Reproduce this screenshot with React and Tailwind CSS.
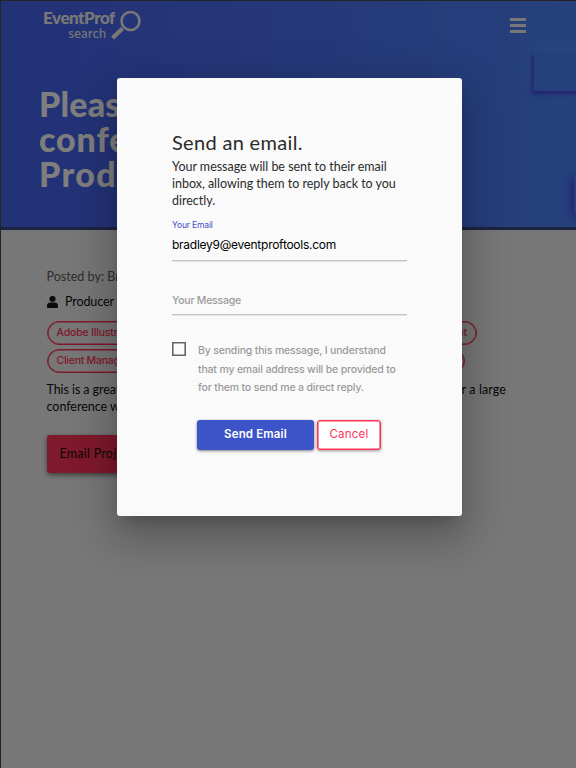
import React from "react";

const display = "font-['Lato','Open_Sans',sans-serif]";
const ui = "font-['Inter','Roboto',sans-serif]";

function Logo() {
  return (
    <div className={`relative h-[33px] w-[98px] text-[#f0f0f0] ${display}`}>
      <div className="whitespace-nowrap text-[17px] font-black leading-[15px] tracking-[-0.45px]">EventProf</div>
      <div className="w-[63.5px] whitespace-nowrap pt-px text-right text-[12.5px] font-medium leading-[16px] tracking-[0.4px]">search</div>
      <svg className="absolute left-[66.5px] top-0" width="32" height="32" viewBox="0 0 32 32" fill="none" stroke="#f0f0f0">
        <circle cx="20.5" cy="11" r="9" strokeWidth="2.6" />
        <path d="M12.5 18.5 2.5 28" strokeWidth="4.2" />
      </svg>
    </div>
  );
}

function Header() {
  return (
    <header className="relative h-[229px] overflow-hidden border-b-[3px] border-[#3a4684] bg-gradient-to-r from-[#4662ec] via-[#4b70f2] to-[#4c83f8]">
      <div className="absolute left-[533px] top-[51px] h-[39px] w-[60px] bg-[#4d81f6] shadow-[-2px_3px_4px_#4444dc,0_-6px_12px_#528cfa]" />
      <div className="absolute left-[573px] top-[174px] h-[38px] w-[20px] bg-[#4d81f6] shadow-[-3px_3px_8px_#4444dc]" />
      <div className="flex items-start justify-between pl-[42px] pr-[50px] pt-[9px]">
        <Logo />
        <div className="mt-[8px] flex w-[16px] flex-col gap-[3px]">
          <span className="h-[3px] bg-[#f0f0f0]" />
          <span className="h-[3px] bg-[#f0f0f0]" />
          <span className="h-[3px] bg-[#f0f0f0]" />
        </div>
      </div>
      <h1 className={`ml-[38px] mt-[43px] whitespace-nowrap text-[34px] font-black leading-[35px] text-[#fdfdfd] ${display}`}>
        <span className="tracking-[0.2px]">Please</span><br />
        <span className="tracking-[0.9px]">conference</span><br />
        <span className="tracking-[1.4px]">Producer</span>
      </h1>
    </header>
  );
}

function Pill({ children, className }) {
  return (
    <span className={`flex h-[24px] items-center whitespace-nowrap rounded-full border border-[#ff3358] text-[10.5px] font-medium tracking-[-0.1px] text-[#ff3358] shadow-[inset_0_0_0_0.6px_#ff3358] ${ui} ${className}`}>
      {children}
    </span>
  );
}

function Listing() {
  return (
    <main className={`pl-[45.5px] pt-[38px] text-[#101010] ${display}`}>
      <p className="whitespace-nowrap text-[12.5px] leading-[17px] tracking-[0.02px] text-[#5c5c5c]">Posted by: Br</p>
      <div className="mt-[8px] flex h-[17px] items-center">
        <svg width="11" height="12" viewBox="0 0 10 12" preserveAspectRatio="none" fill="#161616">
          <circle cx="5" cy="2.9" r="2.8" />
          <path d="M0 11V9.3C0 7.6 1.3 6.5 2.8 6.5h4.4C8.7 6.5 10 7.6 10 9.3V11q0 1-1 1H1q-1 0-1-1Z" />
        </svg>
        <span className="ml-[7.5px] text-[12.5px] leading-[17px] tracking-[-0.1px]">Producer</span>
      </div>
      <div className="mt-[10.5px] flex gap-[4px]">
        <Pill className="w-[120px] pl-[9px]"><span className="tracking-[-0.18px]">Adobe Illustr</span></Pill>
        <Pill className="w-[306.5px] justify-end pr-[9px]">Management</Pill>
      </div>
      <div className="mt-[4px] flex gap-[4px]">
        <Pill className="w-[130px] pl-[9px]"><span className="tracking-[-0.25px]">Client Manag</span></Pill>
        <Pill className="w-[284.5px] justify-end pr-[9px]">Logistics</Pill>
      </div>
      <div className="mt-[8.5px] whitespace-nowrap text-[12.5px] leading-[17px]">
        <div className="flex w-[459.5px] justify-between">
          <span className="tracking-[-0.08px]">This is a great</span>
          <span className="tracking-[0.1px]">for a large</span>
        </div>
        <div className="tracking-[-0.03px]">conference with</div>
      </div>
      <button className="mt-[20px] h-[38px] w-[130px] whitespace-nowrap rounded-[3px] bg-[#ff3358] pl-[13px] text-left text-[12.5px] tracking-[0.25px] shadow-[0_2px_5px_rgba(0,0,0,0.5)]">
        Email Proj
      </button>
    </main>
  );
}

function Dialog() {
  return (
    <section className="mt-[77.5px] h-[438px] w-[345.5px] rounded-[3px] bg-[#fafafa] px-[55.5px] pt-[54.5px] shadow-[0_11px_15px_-7px_rgba(0,0,0,0.2),0_24px_38px_3px_rgba(0,0,0,0.14),0_9px_46px_8px_rgba(0,0,0,0.12)]">
      <h2 className={`whitespace-nowrap text-[20px] leading-[21px] tracking-[0.32px] text-[#2a2a2a] ${display}`}>Send an email.</h2>
      <p className={`mt-[5px] whitespace-nowrap text-[12.5px] leading-[17px] tracking-[-0.02px] text-[#2a2a2a] ${display}`}>
        Your message will be sent to their email<br />inbox, allowing them to reply back to you<br />directly.
      </p>
      <div className="h-[52px] border-b border-[#c4c4c4] shadow-[0_1px_0_#e4e4e4]">
        <div className={`pt-[11px] text-[8.5px] leading-[11px] tracking-[-0.15px] text-[#3d50c8] ${ui}`}>Your Email</div>
        <div className={`mt-[5px] text-[12px] leading-[17px] tracking-[-0.26px] text-black ${ui}`}>bradley9@eventproftools.com</div>
      </div>
      <div className={`mt-[33px] h-[21px] border-b border-[#c4c4c4] text-[10.5px] font-medium leading-[14px] tracking-[-0.22px] text-[#9a9a9a] shadow-[0_1px_0_#e4e4e4] ${ui}`}>Your Message</div>
      <div className="mt-[27px] flex">
        <span className="h-[14px] w-[14px] shrink-0 border border-[#646464] shadow-[inset_0_0_0_0.6px_#646464]" />
        <p className={`ml-[12px] whitespace-nowrap text-[10.5px] font-medium leading-[18.5px] tracking-[-0.17px] text-[#9a9a9a] ${ui}`}>
          By sending this message, I understand<br />that my email address will be provided to<br />for them to send me a direct reply.
        </p>
      </div>
      <div className={`ml-[25px] mt-[22px] flex gap-[3px] text-[11.5px] ${ui}`}>
        <button className="h-[30px] w-[117px] rounded-[3px] bg-[#3d53c8] pt-px font-semibold tracking-[0.15px] text-white shadow-[0_1px_3px_rgba(0,0,0,0.5)]">Send Email</button>
        <button className="h-[30px] w-[64px] rounded-[3px] border border-[#ff3358] bg-white pt-px tracking-[0.25px] text-[#ff3358] shadow-[inset_0_0_0_0.6px_#ff3358,0_1px_3px_rgba(0,0,0,0.4)]">Cancel</button>
      </div>
    </section>
  );
}

export default function App() {
  return (
    <div className="relative h-[768px] w-[576px] overflow-hidden bg-[#efefef]">
      <div className="h-full border-l border-t border-[#484848]">
        <Header />
        <Listing />
      </div>
      <div className="absolute inset-0 flex items-start bg-black/50 pl-[116.5px]">
        <Dialog />
      </div>
    </div>
  );
}
